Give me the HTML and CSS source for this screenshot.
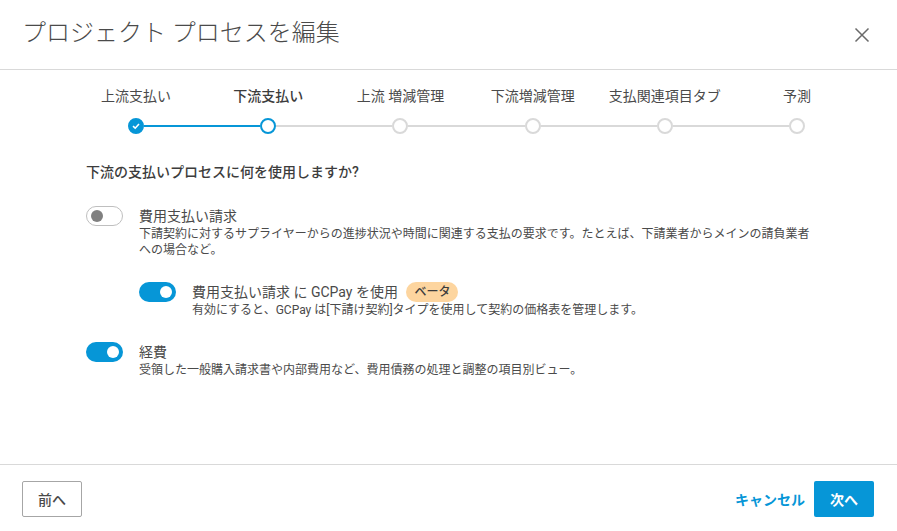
FILE: index.html
```html
<!DOCTYPE html>
<html lang="ja">
<head>
  <meta charset="UTF-8" />
  <meta name="viewport" content="width=device-width, initial-scale=1.0" />
  <title>プロジェクト プロセスを編集</title>
  <link rel="stylesheet" href="styles.css">
</head>
<body>
  <div class="modal">
    <header class="modal-header">
      <h1>プロジェクト プロセスを編集</h1>
      <svg class="close" width="16" height="16" viewBox="0 0 16 16">
        <path d="M1.5 1.5 L14.5 14.5 M14.5 1.5 L1.5 14.5" />
      </svg>
    </header>

    <div class="stepper">
      <div class="step-labels">
        <span>上流支払い</span>
        <span class="current">下流支払い</span>
        <span>上流 増減管理</span>
        <span>下流増減管理</span>
        <span>支払関連項目タブ</span>
        <span>予測</span>
      </div>
      <div class="track">
        <span class="dot done">
          <svg width="10" height="10" viewBox="0 0 10 10">
            <path d="M2 5.2 L4.2 7.2 L8 3" />
          </svg>
        </span>
        <span class="line active"></span>
        <span class="dot current"></span>
        <span class="line"></span>
        <span class="dot"></span>
        <span class="line"></span>
        <span class="dot"></span>
        <span class="line"></span>
        <span class="dot"></span>
        <span class="line"></span>
        <span class="dot"></span>
      </div>
    </div>

    <main class="content">
      <h2>下流の支払いプロセスに何を使用しますか?</h2>

      <div class="option">
        <span class="toggle off"><span class="knob"></span></span>
        <div class="option-text">
          <div class="option-title">費用支払い請求</div>
          <p>下請契約に対するサプライヤーからの進捗状況や時間に関連する支払の要求です。たとえば、下請業者からメインの請負業者への場合など。</p>
        </div>
      </div>

      <div class="option nested">
        <span class="toggle"><span class="knob"></span></span>
        <div class="option-text">
          <div class="option-title">費用支払い請求 に GCPay を使用 <span class="badge">ベータ</span></div>
          <p>有効にすると、GCPay は[下請け契約]タイプを使用して契約の価格表を管理します。</p>
        </div>
      </div>

      <div class="option last">
        <span class="toggle"><span class="knob"></span></span>
        <div class="option-text">
          <div class="option-title">経費</div>
          <p>受領した一般購入請求書や内部費用など、費用債務の処理と調整の項目別ビュー。</p>
        </div>
      </div>
    </main>

    <footer class="modal-footer">
      <button class="btn-prev">前へ</button>
      <div class="footer-right">
        <a class="cancel">キャンセル</a>
        <button class="btn-next">次へ</button>
      </div>
    </footer>
  </div>
</body>
</html>
```

FILE: styles.css
```css
* {
  box-sizing: border-box;
}
body {
  margin: 0;
  background: #fff;
  color: #4a4a4a;
  font-family: Roboto, "Noto Sans CJK JP", sans-serif;
}
.modal {
  width: 897px;
  height: 531px;
  display: flex;
  flex-direction: column;
}
.modal-header {
  height: 70px;
  flex: none;
  display: flex;
  align-items: center;
  justify-content: space-between;
  padding: 0 27px 0 22px;
  border-bottom: 1px solid #d9d9d9;
}
h1 {
  margin: 0 0 3px;
  font-size: 24px;
  font-weight: 300;
  line-height: 32px;
  color: #4a4a4a;
}
.close {
  fill: none;
  stroke: #6a6a6a;
  stroke-width: 1.5;
}
.stepper {
  flex: none;
  padding: 14px 34px 0 70px;
}
.step-labels {
  display: grid;
  grid-template-columns: repeat(6, 132.2px);
  font-size: 14px;
  line-height: 24px;
  text-align: center;
}
.step-labels .current {
  font-weight: 500;
  color: #3c3c3c;
}
.track {
  display: flex;
  align-items: center;
  margin: 10px 58px 0 58px;
  width: 677px;
}
.dot {
  flex: none;
  width: 16px;
  height: 16px;
  border-radius: 50%;
  border: 2px solid #d9d9d9;
  background: #fff;
}
.dot.current {
  border-color: #0696d7;
}
.dot.done {
  display: flex;
  align-items: center;
  justify-content: center;
  border-color: #0696d7;
  background: #0696d7;
}
.dot.done svg {
  fill: none;
  stroke: #fff;
  stroke-width: 1.6;
}
.line {
  flex: 1;
  height: 2px;
  background: #d9d9d9;
}
.line.active {
  background: #0696d7;
}
.content {
  flex: 1;
  padding: 28px 86px 0;
}
h2 {
  margin: 0 0 23px;
  font-size: 14px;
  font-weight: 500;
  line-height: 20px;
  color: #3c3c3c;
}
.option {
  display: flex;
  gap: 16px;
}
.nested {
  margin: 23px 0 0 53px;
}
.last {
  margin-top: 23px;
}
.toggle {
  flex: none;
  width: 37px;
  height: 20px;
  margin-top: 1px;
  padding: 0 4px;
  display: flex;
  align-items: center;
  justify-content: flex-end;
  border-radius: 10px;
  background: #0696d7;
}
.toggle .knob {
  width: 12px;
  height: 12px;
  border-radius: 50%;
  background: #fff;
}
.toggle.off {
  justify-content: flex-start;
  background: #fff;
  border: 1px solid #bfbfbf;
}
.toggle.off .knob {
  background: #808080;
}
.option-text {
  flex: 1;
  padding-top: 1px;
}
.option-title {
  font-size: 14px;
  line-height: 20px;
  color: #4a4a4a;
}
.option-text p {
  margin: 0;
  font-size: 12px;
  line-height: 16px;
  color: #4a4a4a;
}
.badge {
  display: inline-block;
  margin-left: 5px;
  padding: 0 8px;
  height: 20px;
  line-height: 20px;
  font-size: 12px;
  font-weight: 500;
  border-radius: 10px;
  background: #fdd59f;
  color: #3c3c3c;
  vertical-align: top;
}
.modal-footer {
  height: 67px;
  flex: none;
  display: flex;
  justify-content: space-between;
  align-items: flex-start;
  padding: 16px 23px 0 22px;
  border-top: 1px solid #d9d9d9;
}
button {
  width: 60px;
  height: 36px;
  font-family: inherit;
  font-size: 14px;
  font-weight: 700;
  border-radius: 2px;
  padding: 0;
}
.btn-prev {
  background: #fff;
  border: 1px solid #a6a6a6;
  color: #4a4a4a;
  font-weight: 500;
}
.btn-next {
  background: #0696d7;
  border: none;
  color: #fff;
}
.footer-right {
  display: flex;
  align-items: center;
  gap: 9px;
}
.cancel {
  font-size: 14px;
  font-weight: 700;
  color: #0696d7;
}
```
